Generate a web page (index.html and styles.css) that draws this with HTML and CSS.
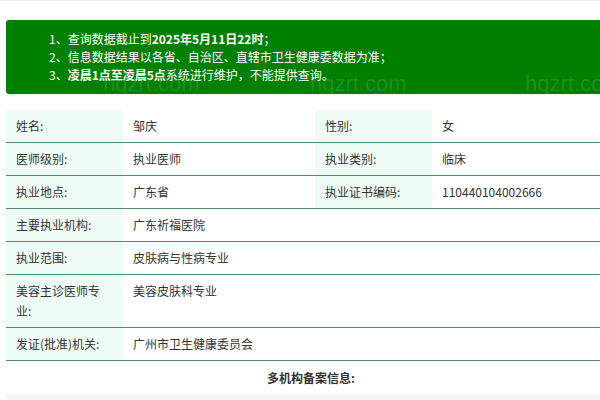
FILE: index.html
```html
<!DOCTYPE html>
<html lang="zh-CN">
<head>
<meta charset="utf-8">
<link rel="stylesheet" href="styles.css">
</head>
<body>
<div class="page">
  <div class="notice">
    <p>1、查询数据截止到<b>2025年5月11日22时</b>；</p>
    <p>2、信息数据结果以各省、自治区、直辖市卫生健康委数据为准；</p>
    <p>3、<b>凌晨1点至凌晨5点</b>系统进行维护，不能提供查询。</p>
    <span class="wm wm1">hgzrt.com</span>
    <span class="wm wm2">hgzrt.com</span>
    <span class="wm wm3">hgzrt.com</span>
  </div>
  <div class="table">
    <div class="row">
      <div class="lab">姓名:</div><div class="val">邹庆</div>
      <div class="lab">性别:</div><div class="val">女</div>
    </div>
    <div class="row">
      <div class="lab">医师级别:</div><div class="val">执业医师</div>
      <div class="lab">执业类别:</div><div class="val">临床</div>
    </div>
    <div class="row">
      <div class="lab">执业地点:</div><div class="val">广东省</div>
      <div class="lab">执业证书编码:</div><div class="val">110440104002666</div>
    </div>
    <div class="row wide">
      <div class="lab">主要执业机构:</div><div class="val">广东祈福医院</div>
    </div>
    <div class="row wide">
      <div class="lab">执业范围:</div><div class="val">皮肤病与性病专业</div>
    </div>
    <div class="row wide">
      <div class="lab">美容主诊医师专业:</div><div class="val">美容皮肤科专业</div>
    </div>
    <div class="row wide">
      <div class="lab">发证(批准)机关:</div><div class="val">广州市卫生健康委员会</div>
    </div>
    <div class="title">多机构备案信息:</div>
  </div>
</div>
<div class="foot"></div>
</body>
</html>
```
FILE: styles.css
```css
html, body {
  margin: 0;
  padding: 0;
  background: #ffffff;
  overflow: hidden;
}
body {
  font-family: "Microsoft YaHei", "Noto Sans CJK SC", sans-serif;
  font-size: 12px;
  color: #333333;
  border-top: 1px solid #eeeeee;
}
.page {
  padding: 19px 0 0 6px;
}
.notice {
  position: relative;
  overflow: hidden;
  background: #008000;
  color: #ffffff;
  border-radius: 3px 0 0 3px;
  padding: 10px 0 10px 43px;
  line-height: 18px;
}
.notice p {
  margin: 0;
}
.notice b {
  font-weight: bold;
}
.wm {
  position: absolute;
  top: 52px;
  font-family: "Liberation Sans", Arial, sans-serif;
  font-size: 22px;
  line-height: 24px;
  color: rgba(255, 255, 255, 0.13);
  white-space: nowrap;
}
.wm1 { left: 97px; }
.wm2 { left: 304px; }
.wm3 { left: 519px; }
.table {
  margin-top: 16px;
  width: 610px;
}
.row {
  display: grid;
  grid-template-columns: 117px 192px 117px 1fr;
  border-bottom: 1px solid #4f8a6d;
  line-height: 20px;
}
.row.wide {
  grid-template-columns: 117px 1fr;
}
.lab {
  background: #effcf5;
  padding: 6px 10px;
}
.val {
  padding: 6px 10px;
}
.title {
  text-align: center;
  font-weight: bold;
  line-height: 20px;
  padding: 7px 0 6px;
}
.foot {
  margin: 0 0 0 6px;
  height: 10px;
  background: #f6f6f6;
}
```
